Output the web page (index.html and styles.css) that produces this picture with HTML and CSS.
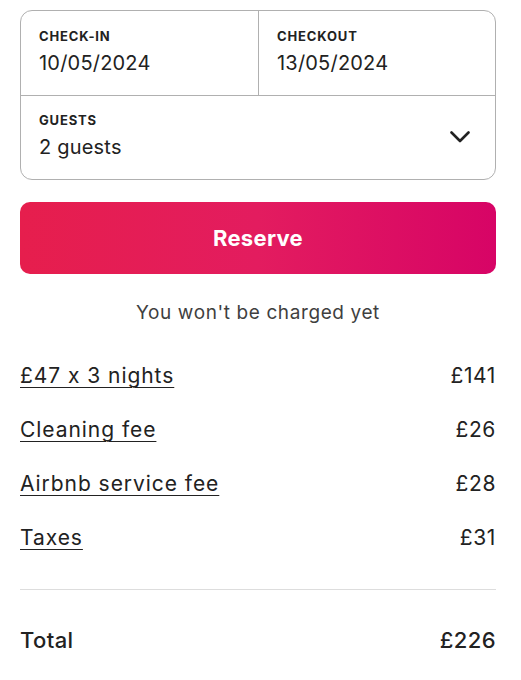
FILE: index.html
```html
<!DOCTYPE html>
<html lang="en">
<head>
<meta charset="utf-8">
<link rel="stylesheet" href="styles.css">
</head>
<body>
<div class="card">
  <div class="picker">
    <div class="cell cell-in">
      <div class="label">CHECK-IN</div>
      <div class="value">10/05/2024</div>
    </div>
    <div class="cell cell-out">
      <div class="label">CHECKOUT</div>
      <div class="value">13/05/2024</div>
    </div>
    <div class="cell cell-guests">
      <div>
        <div class="label">GUESTS</div>
        <div class="value">2 guests</div>
      </div>
      <svg class="chev" width="20" height="12" viewBox="0 0 20 12" aria-hidden="true">
        <path d="M1.5 1.5 L10 10 L18.5 1.5" fill="none" stroke="#222" stroke-width="2.6" stroke-linecap="round" stroke-linejoin="round"/>
      </svg>
    </div>
  </div>
  <button class="reserve">Reserve</button>
  <p class="note">You won't be charged yet</p>
  <div class="lines">
    <div class="line"><span class="desc">£47 x 3 nights</span><span class="amt">£141</span></div>
    <div class="line"><span class="desc">Cleaning fee</span><span class="amt">£26</span></div>
    <div class="line"><span class="desc">Airbnb service fee</span><span class="amt">£28</span></div>
    <div class="line"><span class="desc">Taxes</span><span class="amt">£31</span></div>
  </div>
  <div class="total"><span>Total</span><span>£226</span></div>
</div>
</body>
</html>
```
FILE: styles.css
```css
* { box-sizing: border-box; }
html, body { margin: 0; background: #fff; }
body {
  font-family: "Inter", "Liberation Sans", sans-serif;
  font-feature-settings: "calt" 0;
  color: #222;
  padding: 10px 25px 0 20px;
}
.card { width: 476px; }
.picker {
  display: grid;
  grid-template-columns: 238px 1fr;
  border: 1px solid #b0b0b0;
  border-radius: 12px;
  height: 170px;
}
.cell {
  padding: 17px 18px 0 18px;
  height: 84px;
}
.cell-in { border-right: 1px solid #b0b0b0; }
.cell-guests {
  grid-column: 1 / 3;
  border-top: 1.5px solid #b0b0b0;
  height: 84px;
  padding-top: 16px;
  display: flex;
  align-items: flex-start;
  justify-content: space-between;
  padding-right: 25px;
}
.label {
  font-size: 13px;
  font-weight: 700;
  letter-spacing: 0.85px;
  line-height: 16px;
  color: #222;
}
.value {
  font-size: 20px;
  line-height: 26px;
  letter-spacing: 0.2px;
  margin-top: 6px;
  color: #222;
}
.chev { margin-top: 19px; }
.reserve {
  display: block;
  width: 100%;
  height: 72px;
  margin-top: 22px;
  border: 0;
  border-radius: 10px;
  background: linear-gradient(to right, #e61e4d 0%, #e31c5f 50%, #d70466 100%);
  color: #fff;
  font-family: inherit;
  font-feature-settings: "calt" 0;
  font-size: 22px;
  font-weight: 700;
  letter-spacing: 0.3px;
}
.note {
  margin: 26px 0 0;
  text-align: center;
  font-size: 19px;
  line-height: 26px;
  letter-spacing: 0.6px;
  color: #3f3f3f;
}
.lines {
  margin-top: 36px;
  display: flex;
  flex-direction: column;
  gap: 26px;
  padding-bottom: 37px;
  border-bottom: 1px solid #dddddd;
}
.line {
  display: flex;
  justify-content: space-between;
  font-size: 21px;
  line-height: 28px;
  letter-spacing: 0.6px;
  color: #222;
}
.desc {
  letter-spacing: 0.95px;
  text-decoration: underline;
  text-underline-offset: 4px;
  text-decoration-thickness: 1px;
}
.total {
  display: flex;
  justify-content: space-between;
  margin-top: 36px;
  font-size: 22px;
  line-height: 28px;
  letter-spacing: 0.4px;
  font-weight: 500;
}
```
